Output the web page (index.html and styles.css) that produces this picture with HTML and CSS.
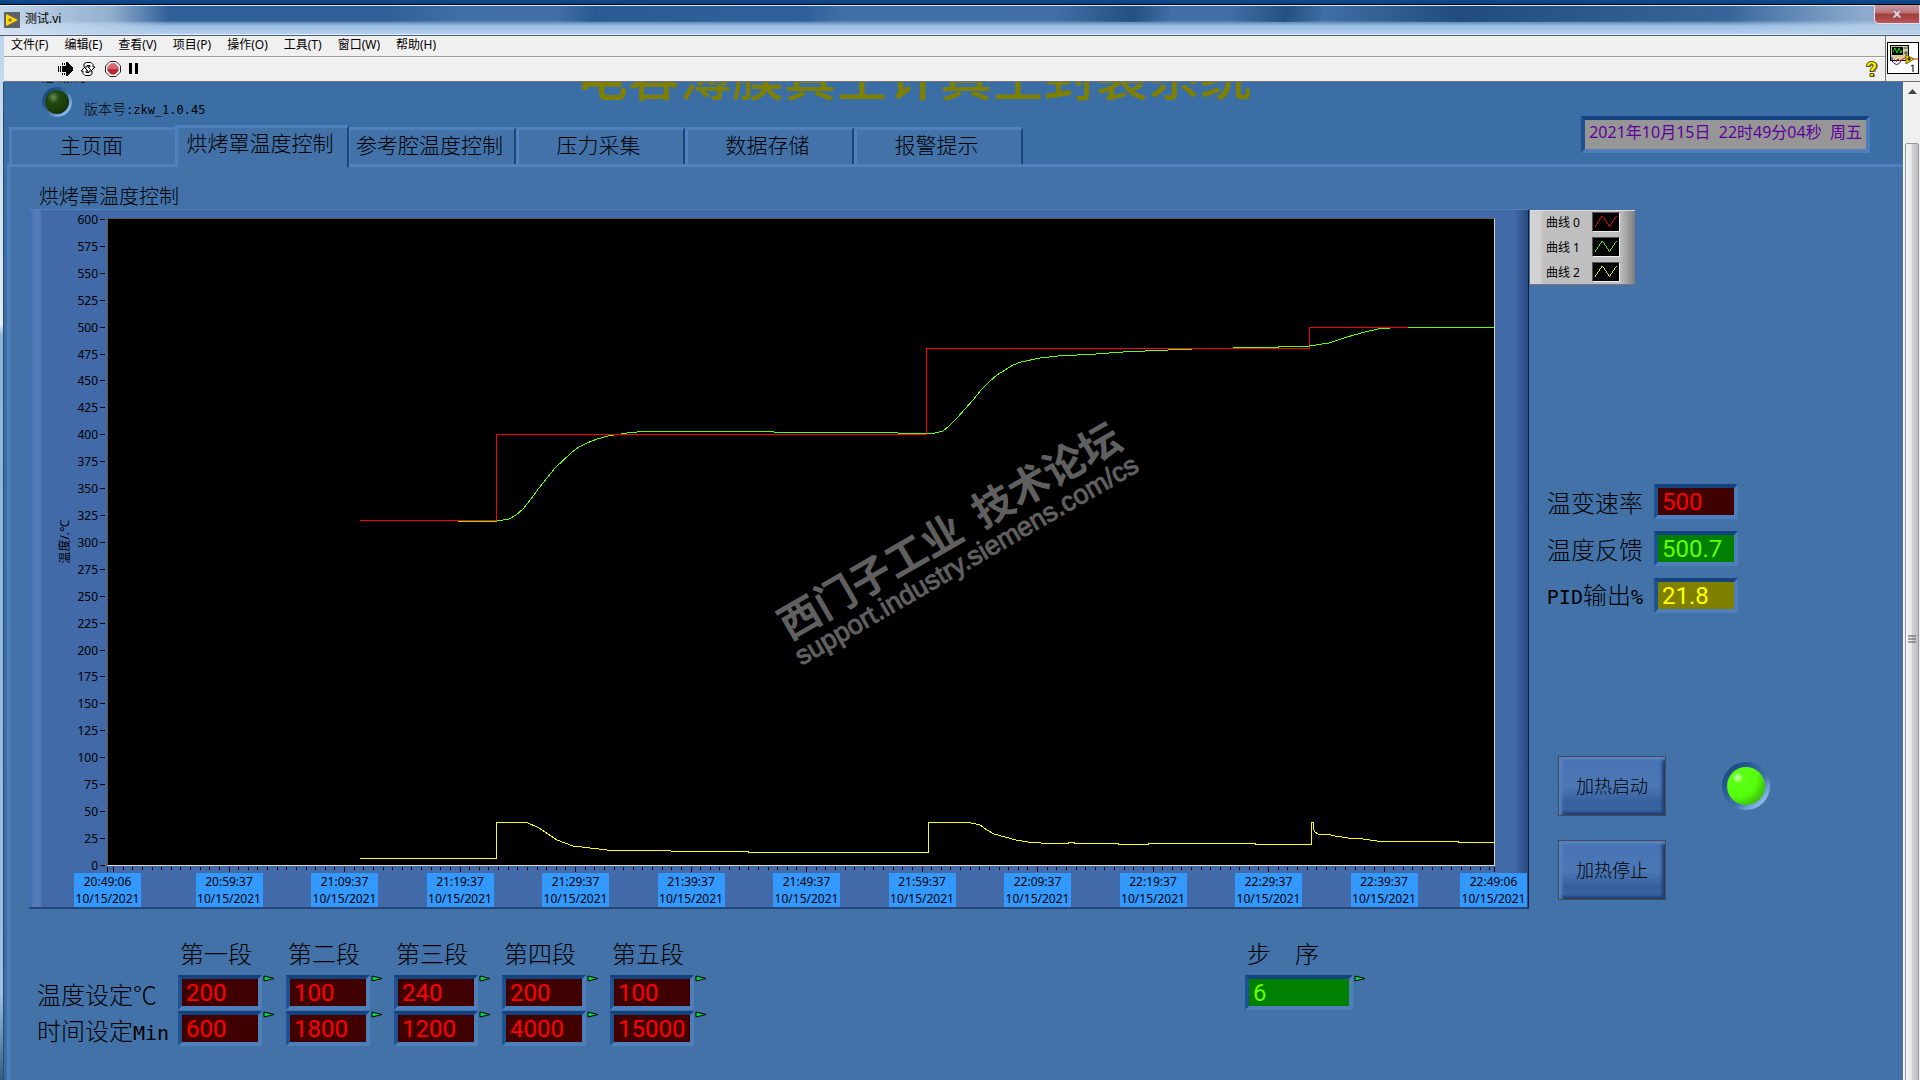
FILE: index.html
```html
<!DOCTYPE html>
<html lang="zh-CN">

<head>
  <meta charset="UTF-8">
  <meta name="viewport" content="width=device-width, initial-scale=1.0">
  <title>测试.vi</title>
  <link rel="stylesheet" href="styles.css">
</head>

<body>
  <header class="titlebar">
    <svg class="app-icon" width="16" height="16" viewBox="0 0 16 16">
      <rect width="16" height="16" fill="#5f6068"/>
      <path d="M2 2 L14 8 L2 14 Z" fill="#ffd800"/>
      <path d="M4 8 H8 M6 6 V10" stroke="#7a5a00" fill="none"/>
    </svg>
    <span class="app-name">测试.vi</span>
    <button class="close" aria-label="关闭">
      <svg width="12" height="10" viewBox="0 0 12 10">
        <path d="M1 1 H4 L6 3 L8 1 H11 L8 5 L11 9 H8 L6 7 L4 9 H1 L4 5 Z" fill="#d9cdd3" stroke="#7c4a55" stroke-width="0.6"/>
      </svg>
    </button>
  </header>

  <div class="bars">
    <div class="bars-left">
      <nav class="menu">
        <button>文件(F)</button>
        <button>编辑(E)</button>
        <button>查看(V)</button>
        <button>项目(P)</button>
        <button>操作(O)</button>
        <button>工具(T)</button>
        <button>窗口(W)</button>
        <button>帮助(H)</button>
      </nav>
      <div class="toolbar">
        <button aria-label="运行">
          <svg width="16" height="14" viewBox="0 0 16 14" shape-rendering="crispEdges">
            <path d="M0 4 H1 V10 H0 Z M2 4 H3 V10 H2 Z M4 4 H8 V0 H9 L15 6 V8 L9 14 H8 V10 H4 Z"/>
            <path d="M4 1 H5 V3 H4 Z M6 1 H7 V3 H6 Z M4 11 H5 V13 H4 Z M6 11 H7 V13 H6 Z"/>
          </svg>
        </button>
        <button aria-label="连续运行">
          <svg width="16" height="14" viewBox="0 0 16 14" fill="#fff" stroke="#000">
            <path d="M4 5 V2 L6 0.500 H11 L13 2.500 V5 H15 L11.500 8.500 L8 5 H10 V3.500 H7 V5 Z"/>
            <path d="M12 9 V12 L10 13.500 H5 L3 11.500 V9 H1 L4.500 5.500 L8 9 H6 V10.500 H9 V9 Z"/>
          </svg>
        </button>
        <button class="stop" aria-label="中止执行">
          <svg width="16" height="16" viewBox="0 0 16 16">
            <path d="M5 0.500 H11 L15.500 5 V11 L11 15.500 H5 L0.500 11 V5 Z" fill="#fff" stroke="#222"/>
            <path d="M6 2.500 H10 L13.500 6 V10 L10 13.500 H6 L2.500 10 V6 Z" fill="#b82a2f"/>
            <path d="M6 2.500 H10 L13.500 6 V8 H2.500 V6 Z" fill="#d9666a"/>
          </svg>
        </button>
        <button aria-label="暂停">
          <svg width="10" height="11" viewBox="0 0 10 11"><path d="M0 0 H3 V11 H0 Z M6 0 H9 V11 H6 Z"/></svg>
        </button>
        <button class="help" aria-label="即时帮助">
          <svg width="12" height="16" viewBox="0 0 12 16" fill="none">
            <path d="M3 6 V4 Q3 3 7 3 Q10 3 10 5 Q10 7 8 8 V11 M7 13 V16" stroke="#8a8a8a" stroke-width="4"/>
            <path d="M0.500 5.500 H4 V4 Q4 3 5.500 3 Q7 3 7 4.500 Q7 6 5.500 7 Q4 8 4 10.500 H7.500 Q7.500 9 9 8 Q10.500 6.500 10.500 4.500 Q10.500 0.500 5.500 0.500 Q0.500 0.500 0.500 5.500 Z M4 12.500 H7.500 V15.500 H4 Z" fill="#fe0" stroke="#4a4800"/>
          </svg>
        </button>
      </div>
    </div>
    <div class="vi-icon">
      <svg width="32" height="32" viewBox="0 0 32 32" fill="none">
        <rect x="0.500" y="0.500" width="31" height="31" fill="#fff" stroke="#000"/>
        <rect x="3.500" y="3.500" width="18" height="15" fill="#d0cba0" stroke="#000"/>
        <rect x="5" y="5" width="11" height="8" fill="#000"/>
        <path d="M6 10 L8 6 L10 11 L12 6 L14 11 L15 8" stroke="#20d020"/>
        <path d="M18 5 V7 M20 5 V7 M18 10 H20 V12 H18 Z" stroke="#444"/>
        <path d="M5 15 V19 Q10 26 14 19" stroke="#1a1aa8"/>
        <path d="M9 20 L11 17 L13 19 L19 15" stroke="#f01010"/>
        <path d="M19 13 L27 17 L19 22 Z" fill="#ffe600" stroke="#6a5a00"/>
        <path d="M20 17 H24 M22 15 V19" stroke="#000"/>
        <path d="M27 17 H31" stroke="#f01010"/>
        <path d="M24 24 L26 23 V30" stroke="#000"/>
      </svg>
    </div>
  </div>

  <div class="workspace">
    <main class="face">
      <section class="top">
        <div class="status">
          <div class="comm">通讯指示</div>
          <div class="version-row">
            <span class="led led-off"></span>
            <span class="version kai">版本号<span class="ascii">:zkw_1.0.45</span></span>
          </div>
        </div>
        <h1>电容薄膜真空计真空封装系统</h1>
        <div class="tabs" role="tablist">
          <button role="tab">主页面</button>
          <button role="tab" class="active" aria-selected="true">烘烤罩温度控制</button>
          <button role="tab">参考腔温度控制</button>
          <button role="tab">压力采集</button>
          <button role="tab">数据存储</button>
          <button role="tab">报警提示</button>
        </div>
        <time class="clock bevel" datetime="2021-10-15T22:49:04">2021年10月15日  22时49分04秒  周五</time>
      </section>

      <section class="page">
        <div class="left">
          <h2 class="kai">烘烤罩温度控制</h2>
          <div class="chart">
            <div class="y-title"><span>温度/.℃</span></div>
            <ul class="y-axis" id="yAxis"></ul>
            <div class="plot">
              <svg viewBox="0 0 1386 646" preserveAspectRatio="none">
                <path class="green" d="M350 302 H389 L401 300 L408 296 L415 290 L423 280 L431 269 L447 249 L463 234 L471 228 L479 224 L489 220 L500 217 L519 214 L540 212 H665 L666 213 H789 L790 214 H827 L835 212 L841 207 L849 199 L857 190 L865 181 L873 171 L881 163 L889 156 L897 151 L905 146 L913 143 L932 139 L950 137 L988 135 L1015 133 L1060 131 L1084 130"/>
                <path class="red" d="M252 301 H388 V215 H818 V129 H1201 V108 H1300"/>
                <path class="green" d="M1125 128 H1170 V127 H1201 L1208 126 L1221 124 L1239 118 L1257 113 L1270 110 L1282 109 M1300 108 H1386"/>
                <path class="yellow" d="M252 639 H388 V603 H418 L431 609 L440 615 L449 621 L457 624 L465 627 L482 629 L499 631 H562 L563 632 H640 V633 H820 V603 H859 L872 606 L879 611 L886 615 L897 618 L908 621 L920 623 L933 624 H960 V623 H966 V624 H1010 V625 H1040 V624 H1147 V625 H1203 V603 H1205 V609 L1207 613 L1210 615 H1219 L1227 617 L1240 619 L1255 620 L1269 622 H1350 V623 H1386"/>
              </svg>
              <div class="watermark">
                <div class="wm-cn">西门子工业&nbsp;&nbsp;技术论坛</div>
                <div class="wm-url">support.industry.siemens.com/cs</div>
              </div>
            </div>
            <svg class="x-ticks" id="xTicks" viewBox="0 0 1388 7" preserveAspectRatio="none"></svg>
            <ul class="x-axis" id="xAxis"></ul>
          </div>
        </div>

        <aside class="right">
          <ul class="legend">
            <li>曲线 0 <svg class="red" width="28" height="20" viewBox="0 0 28 20"><path d="M2 15 L10 3 L18 15 L26 3"/></svg></li>
            <li>曲线 1 <svg class="green" width="28" height="20" viewBox="0 0 28 20"><path d="M2 15 L10 3 L18 15 L26 3"/></svg></li>
            <li>曲线 2 <svg class="yellow" width="28" height="20" viewBox="0 0 28 20"><path d="M2 15 L10 3 L18 15 L26 3"/></svg></li>
          </ul>

          <div class="readouts">
            <label class="kai" for="rate">温变速率</label>
            <input class="digits bevel red" id="rate" value="500" readonly>
            <label class="kai" for="feedback">温度反馈</label>
            <input class="digits bevel green" id="feedback" value="500.7" readonly>
            <label class="kai" for="pid"><span class="ascii">PID</span>输出<span class="ascii">%</span></label>
            <input class="digits bevel yellow" id="pid" value="21.8" readonly>
          </div>

          <div class="actions">
            <button>加热启动</button>
            <span class="led led-on"></span>
            <button>加热停止</button>
          </div>
        </aside>

        <div class="bottom">
          <div class="setpoints">
            <span></span>
            <span class="kai" id="s1">第一段</span>
            <span class="kai" id="s2">第二段</span>
            <span class="kai" id="s3">第三段</span>
            <span class="kai" id="s4">第四段</span>
            <span class="kai" id="s5">第五段</span>

            <span class="kai row-name" id="temp">温度设定℃</span>
            <div class="field"><input class="digits bevel red" aria-labelledby="temp s1" value="200"></div>
            <div class="field"><input class="digits bevel red" aria-labelledby="temp s2" value="100"></div>
            <div class="field"><input class="digits bevel red" aria-labelledby="temp s3" value="240"></div>
            <div class="field"><input class="digits bevel red" aria-labelledby="temp s4" value="200"></div>
            <div class="field"><input class="digits bevel red" aria-labelledby="temp s5" value="100"></div>

            <span class="kai row-name" id="mins">时间设定<span class="ascii">Min</span></span>
            <div class="field"><input class="digits bevel red" aria-labelledby="mins s1" value="600"></div>
            <div class="field"><input class="digits bevel red" aria-labelledby="mins s2" value="1800"></div>
            <div class="field"><input class="digits bevel red" aria-labelledby="mins s3" value="1200"></div>
            <div class="field"><input class="digits bevel red" aria-labelledby="mins s4" value="4000"></div>
            <div class="field"><input class="digits bevel red" aria-labelledby="mins s5" value="15000"></div>
          </div>

          <div class="step">
            <label class="kai" for="step"><span>步</span><span>序</span></label>
            <div class="field"><input class="digits bevel green" id="step" value="6"></div>
          </div>
        </div>
      </section>
    </main>

    <div class="scrollbar">
      <svg class="scroll-up" width="9" height="5" viewBox="0 0 9 5"><path d="M0 5 L4.500 0 L9 5 Z" fill="#444"/></svg>
      <div class="thumb">
        <svg width="8" height="9" viewBox="0 0 8 9"><path d="M0 1 H8 M0 4 H8 M0 7 H8" stroke="#555"/></svg>
      </div>
    </div>
  </div>

  <script>
    // Y axis: 600 down to 0
    const yAxis = document.getElementById('yAxis');
    for (let v = 600; v >= 0; v -= 25) {
      const li = document.createElement('li');
      li.textContent = v;
      yAxis.appendChild(li);
    }

    // X axis: two lines per label
    const times = ['20:49:06', '20:59:37', '21:09:37', '21:19:37', '21:29:37', '21:39:37', '21:49:37',
      '21:59:37', '22:09:37', '22:19:37', '22:29:37', '22:39:37', '22:49:06'];
    const xAxis = document.getElementById('xAxis');
    times.forEach(t => {
      const li = document.createElement('li');
      li.innerHTML = `${t}<br>10/15/2021`;
      xAxis.appendChild(li);
    });

    // 12 minor ticks between two major ones
    let d = 'M0 1 V6 M1387 1 V6 ';
    for (let i = 0; i <= 143; i++) {
      const x = Math.round(6 + i * 115.5 / 12);
      if (x < 1386) {
        d += `M${x} 1 V${i % 12 === 0 ? 6 : 4} `;
      }
    }
    document.getElementById('xTicks').innerHTML = `<path d="${d}"/>`;

    // small green flag beside each writable field
    document.querySelectorAll('.field').forEach(field => {
      field.insertAdjacentHTML('beforeend',
        '<svg class="flag" width="12" height="7" viewBox="0 0 12 7"><path d="M1 1 L11 3.500 L1 6 Z"/></svg>');
    });
  </script>
</body>

</html>
```
FILE: styles.css
```css
* {
  box-sizing: border-box;
}

body {
  margin: 0;
  height: 100vh;
  overflow: hidden;
  display: flex;
  flex-direction: column;
  font-family: "Noto Sans", "Noto Sans CJK SC", sans-serif;
  font-size: 12px;
  color: #000;
  background: linear-gradient(#b9d3ea 0, #e2edf6 30%, #8db4da 31%, #9cc3e6 92%, #335c84 100%);
}

button {
  font-family: inherit;
  padding: 0;
  border: none;
  background: none;
  color: #000;
}

ul {
  list-style: none;
  margin: 0;
  padding: 0;
}

svg {
  display: block;
}

/* window chrome */
.titlebar {
  flex: none;
  height: 36px;
  padding: 5px 0 0 4px;
  display: flex;
  align-items: flex-start;
  border-bottom: 1px solid #4d5c70;
  background:
    linear-gradient(90deg, rgba(214, 228, 242, 0.9) 0, rgba(190, 210, 232, 0.7) 110px, transparent 170px) 0 6px no-repeat,
    linear-gradient(90deg, transparent 90%, rgba(190, 210, 232, 0.6) 97%) 0 6px no-repeat,
    linear-gradient(100deg, rgba(20, 70, 130, 0.4) 20%, transparent 24%, transparent 29%, rgba(20, 70, 130, 0.5) 31%, rgba(30, 84, 146, 0.5) 42%, transparent 44%, transparent 55%, rgba(16, 60, 108, 0.6) 59%, transparent 61%, transparent 64%, rgba(16, 60, 108, 0.6) 67%, transparent 69%, rgba(20, 60, 110, 0.7) 76%, rgba(20, 60, 110, 0.4) 84%, transparent 96%) 0 6px / 100% 16px no-repeat,
    linear-gradient(#104a90 0, #0e3f7c 4px, #000814 4px, #000814 5px, #dce9f5 5px, #dce9f5 6px, #3f6fa5 6px, #3f6fa5 20px, #9dbfe2 26px, #b0d0f0 34px, #e8f2fb 34px);
}

.app-icon {
  margin-top: 7px;
}

.app-name {
  margin: 5px 0 0 5px;
  line-height: 18px;
}

.close {
  margin-left: auto;
  width: 46px;
  height: 19px;
  display: flex;
  align-items: center;
  justify-content: center;
  border: 1px solid #e8dfe4;
  border-top: none;
  border-radius: 0 0 0 5px;
  background: linear-gradient(#c99a9f 0, #bb7177 45%, #a23c3c 50%, #b6585a 100%);
}

.bars {
  flex: none;
  height: 46px;
  margin-left: 4px;
  display: flex;
  background: #f0f0f0;
  border-bottom: 1px solid #707070;
}

.bars-left {
  flex: 1;
  border-right: 1px solid #707070;
}

.menu {
  height: 21px;
  padding: 0 7px 4px;
  display: flex;
  align-items: center;
  gap: 16px;
  border-bottom: 1px solid #9a9a9a;
}

.menu button {
  font-size: 12px;
}

.toolbar {
  height: 24px;
  padding: 0 7px 2px 54px;
  display: flex;
  align-items: center;
  gap: 6px;
  border-top: 1px solid #fff;
}

.toolbar .stop {
  margin: 0 2px 0 3px;
}

.toolbar .help {
  margin-left: auto;
}

.vi-icon {
  width: 34px;
  padding: 6px 1px;
}

/* workspace */
.workspace {
  flex: 1;
  min-height: 0;
  margin-left: 3px;
  display: flex;
  overflow: hidden;
  border-left: 1px solid #2b4a68;
}

/* front panel is scrolled down a little */
.face {
  flex: 1;
  margin-top: -34px;
  display: flex;
  flex-direction: column;
  background: #3b6ea5;
}

.kai {
  font-family: "Noto Sans CJK SC", sans-serif;
  font-weight: 300;
  font-size: 24px;
}

.ascii {
  font-family: "DejaVu Sans Mono", monospace;
  font-size: 20px;
}

.top {
  display: grid;
  grid-template-columns: 572px 1fr auto;
  grid-template-rows: 77px 39px;
}

.status {
  padding: 21px 0 0 38px;
}

.comm {
  line-height: 17px;
}

.version-row {
  display: flex;
  align-items: center;
  gap: 12px;
}

.version {
  padding-top: 12px;
}

.version.kai {
  font-size: 14px;
}

.version .ascii {
  font-size: 12px;
}

h1 {
  margin: 0;
  font-family: "Noto Sans CJK SC", sans-serif;
  font-weight: 500;
  font-size: 52px;
  line-height: 52px;
  white-space: nowrap;
  color: #808000;
}

.tabs {
  grid-column: 1 / 3;
  grid-row: 2;
  display: flex;
  align-items: flex-end;
  padding-left: 5px;
}

.tabs button {
  width: 169px;
  height: 37px;
  padding: 0 5px 4px 0;
  font-size: 21px;
  line-height: 30px;
  white-space: nowrap;
  font-weight: 300;
  background: #4272a8;
  border-top: 3px solid #4f82bd;
  border-left: 3px solid #4f82bd;
  border-right: 2px solid #1d4478;
}

.tabs .active {
  position: relative;
  width: 174px;
  height: 42px;
  margin: 0 -2px -3px -3px;
  padding-bottom: 10px;
}

.bevel {
  border: 4px solid;
  border-color: #124380 #4f7fba #4f7fba #1d5190;
}

.clock {
  grid-column: 3;
  grid-row: 1 / 3;
  align-self: end;
  height: 37px;
  margin: 0 33px 11px 0;
  padding: 0 4px;
  font-size: 16px;
  line-height: 25px;
  white-space: pre;
  color: #60009c;
  background: #969696;
}

.page {
  flex: 1;
  display: grid;
  grid-template-columns: 1fr 374px;
  grid-template-rows: auto 1fr;
  margin-left: 3px;
  padding-left: 19px;
  background: #4272a8;
  border-top: 3px solid #4f82bd;
  border-left: 3px solid #4f82bd;
}

h2 {
  margin: 0 10px;
  padding: 17px 0 1px;
}

h2.kai {
  font-size: 20px;
  line-height: 24px;
}

/* chart */
.chart {
  display: grid;
  grid-template-columns: 16px 35px 1fr;
  grid-template-rows: 60vh 7px 34px;
  padding: 8px 33px 0 27px;
  border-top: 1px solid #4f82bd;
  border-bottom: 2px solid #23457a;
  background: linear-gradient(90deg, #3c6bac 0, #527bb8 5px, #527bb8 11px, #426aa8 13px, #426aa8 calc(100% - 14px), #27497f 100%);
  border-right: 1px solid #0c1c38;
}

.y-title {
  display: flex;
  align-items: center;
  justify-content: center;
}

.y-title span {
  writing-mode: vertical-rl;
  text-orientation: sideways;
  transform: rotate(180deg);
}

.y-axis {
  display: flex;
  flex-direction: column;
  justify-content: space-between;
  margin: -7px 0 -8px;
}

.y-axis li {
  display: flex;
  align-items: center;
  justify-content: flex-end;
  gap: 2px;
  padding-right: 2px;
  line-height: 17px;
}

.y-axis li::after {
  content: "";
  width: 5px;
  height: 1px;
  background: #000;
}

.plot {
  position: relative;
  background: #000;
  border: 1px solid #5e5a50;
  border-right-color: #d8d4cc;
  border-bottom-color: #d8d4cc;
}

.plot > svg {
  width: 100%;
  height: 100%;
  fill: none;
  shape-rendering: crispEdges;
}

.plot .red, .legend .red {
  stroke: #f00;
}

.plot .green, .legend .green {
  stroke: #6f0;
}

.plot .yellow, .legend .yellow {
  stroke: #ff0;
}

.watermark {
  position: absolute;
  left: 61.2%;
  top: 50%;
  transform: translate(-50%, -50%) rotate(-30deg);
  text-align: center;
  white-space: nowrap;
  color: #606060;
}

.wm-cn {
  font-family: "Noto Sans CJK SC", sans-serif;
  font-weight: 700;
  font-size: 41px;
  line-height: 42px;
}

.wm-url {
  font-family: "Liberation Sans", Arial, sans-serif;
  font-size: 27px;
  line-height: 32px;
  -webkit-text-stroke: 1px #606060;
}

.x-ticks {
  grid-column: 3;
  width: 100%;
  height: 7px;
  stroke: #000;
  shape-rendering: crispEdges;
  overflow: visible;
}

.x-axis {
  grid-column: 3;
  display: flex;
  justify-content: space-between;
  margin: 0 -32px 0 -33px;
}

.x-axis li {
  width: 67px;
  line-height: 17px;
  text-align: center;
  background: #39f;
}

.x-axis li:first-child {
  margin-right: 6px;
}

.x-axis li:last-child {
  margin-left: -6px;
}

/* right column */
.right {
  padding-left: 1px;
}

.legend {
  width: 105px;
  height: 75px;
  margin-top: 43px;
  padding: 0 15px 0 16px;
  background: linear-gradient(90deg, #d4d4d4 0, #d0d0d0 10px, #bfbfbf 14px, #bfbfbf 90px, #7d7d7d 100%);
  border-top: 1px solid #dcdcdc;
  border-bottom: 1px solid #777;
}

.legend li {
  height: 25px;
  display: flex;
  align-items: center;
  justify-content: space-between;
  padding-bottom: 3px;
}

.legend svg {
  fill: none;
  background: #000;
  border: 1px solid #555;
  border-right-color: #eee;
  border-bottom-color: #eee;
  shape-rendering: crispEdges;
}

.readouts {
  display: grid;
  grid-template-columns: 97px 84px;
  row-gap: 12px;
  column-gap: 11px;
  align-items: center;
  margin: 199px 0 0 16px;
}

.readouts label {
  text-align: right;
  white-space: nowrap;
  line-height: 30px;
}

.digits {
  display: block;
  width: 84px;
  height: 35px;
  padding: 0 4px;
  border-radius: 0;
  outline: none;
  font-family: Roboto, sans-serif;
  font-size: 24px;
  line-height: 27px;
}

.digits.red {
  color: #f00;
  background: #400000;
}

.digits.green {
  color: #6f0;
  background: #008000;
}

.digits.yellow {
  color: #ff0;
  background: #808000;
}

.actions {
  display: grid;
  grid-template-columns: 108px 48px;
  gap: 24px 56px;
  align-items: center;
  margin: 143px 0 0 28px;
}

.actions button {
  height: 60px;
  padding-bottom: 2px;
  font-size: 18px;
  font-weight: 300;
  border: 1px solid #444b55;
  background: linear-gradient(#4672b4 0, #4c78b6 50%, #355f9c 80%, #3b68a6 100%);
  box-shadow: inset 4px 4px 3px -1px #5583c2, inset -4px -4px 3px -1px #1f3f74;
}

.led {
  border-radius: 50%;
  border: 5px solid transparent;
}

.led-off {
  width: 30px;
  height: 30px;
  border-width: 3px;
  background:
    radial-gradient(circle at 35% 30%, #6c8f5c 0, #234a12 25%, #1c3c08 60%, #0c2004 100%) padding-box,
    linear-gradient(135deg, #1b4c86 20%, #3b6ea5 50%, #8fc0f5 85%) border-box;
}

.led-on {
  width: 48px;
  height: 48px;
  background:
    radial-gradient(circle at 28% 28%, #d8ffc8 0, #5cff14 14%, #55ff0c 50%, #38b808 80%, #237a04 100%) padding-box,
    linear-gradient(135deg, #1b4c86 15%, #4272a8 60%, #9ccbfb 90%) border-box;
}

/* bottom row */
.bottom {
  grid-column: 1 / 3;
  display: flex;
  justify-content: space-between;
  padding: 28px 550px 0 8px;
}

.setpoints {
  display: grid;
  grid-template-columns: 117px repeat(5, 84px);
  grid-template-rows: 37px 35px 35px;
  row-gap: 1px;
  column-gap: 24px;
  line-height: 32px;
  white-space: nowrap;
}

.setpoints .row-name {
  line-height: 37px;
}

.field {
  position: relative;
}

.flag {
  position: absolute;
  left: 100%;
  top: 0;
  margin-left: 1px;
  fill: #00e040;
  stroke: #000;
}

.setpoints > span:not(.row-name) {
  padding-left: 2px;
}

.step label {
  display: flex;
  gap: 24px;
  height: 38px;
  padding-left: 2px;
  line-height: 32px;
}

.step .digits {
  width: 108px;
}

/* scrollbar */
.scrollbar {
  width: 17px;
  display: flex;
  flex-direction: column;
  align-items: center;
  background: #f0f0f0;
  border-left: 1px solid #fff;
}

.scroll-up {
  flex: none;
  margin: 7px 0 49px;
}

.thumb {
  flex: none;
  width: 14px;
  height: 92vh;
  display: flex;
  align-items: center;
  justify-content: center;
  border: 1px solid #979797;
  border-radius: 2px;
  background: linear-gradient(90deg, #f5f5f5 0, #e8e8e8 45%, #cfcfd2 55%, #bfbfc3 100%);
}
```
